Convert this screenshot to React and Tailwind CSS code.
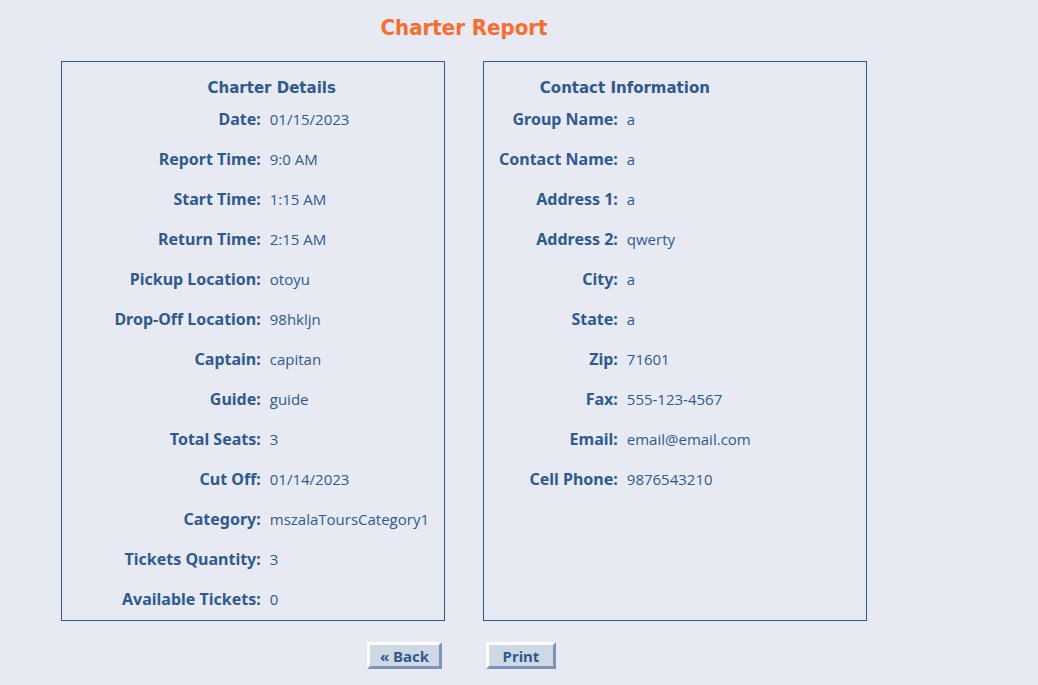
const charter = [
  ['Date', '01/15/2023'],
  ['Report Time', '9:0 AM'],
  ['Start Time', '1:15 AM'],
  ['Return Time', '2:15 AM'],
  ['Pickup Location', 'otoyu'],
  ['Drop-Off Location', '98hkljn'],
  ['Captain', 'capitan'],
  ['Guide', 'guide'],
  ['Total Seats', '3'],
  ['Cut Off', '01/14/2023'],
  ['Category', 'mszalaToursCategory1'],
  ['Tickets Quantity', '3'],
  ['Available Tickets', '0'],
];

const contact = [
  ['Group Name', 'a'],
  ['Contact Name', 'a'],
  ['Address 1', 'a'],
  ['Address 2', 'qwerty'],
  ['City', 'a'],
  ['State', 'a'],
  ['Zip', '71601'],
  ['Fax', '555-123-4567'],
  ['Email', 'email@email.com'],
  ['Cell Phone', '9876543210'],
];

function Panel({ title, rows, align }) {
  return (
    <section className={`flex items-start border border-[#2f5a90] px-[15px] pt-[15px] pb-px ${align}`}>
      <table>
        <caption className="h-[22px] whitespace-nowrap text-[15px] leading-[22px] font-bold font-['Tahoma','DejaVu_Sans',sans-serif]">
          {title}
        </caption>
        <tbody>
          {rows.map(([label, value]) => (
            <tr key={label} className="h-10 whitespace-nowrap">
              <th scope="row" className="pr-[9px] text-right text-base font-bold">
                {label}:
              </th>
              <td className="text-[15px] font-['Tahoma','Open_Sans',sans-serif]">{value}</td>
            </tr>
          ))}
        </tbody>
      </table>
    </section>
  );
}

const button =
  'h-[27px] border-[3px] border-t-white border-l-white border-r-[#7b94b7] border-b-[#7b94b7] bg-[#cfd9e6] text-[15px] leading-5 font-bold';

export default function App() {
  return (
    <div className="min-h-screen bg-[#e7eaf2] pb-4 text-[#2f5a90] font-['Tahoma','Noto_Sans',sans-serif] md:pr-[110px]">
      <h1 className="pt-[13px] text-center text-[22px] leading-[30px] font-bold text-[#fb6b2b] font-['Tahoma','DejaVu_Sans_Condensed',sans-serif]">
        Charter Report
      </h1>
      <main className="mt-[18px] grid gap-[38px] px-4 md:grid-cols-2 md:px-[61px]">
        <Panel title="Charter Details" rows={charter} align="justify-end" />
        <Panel title="Contact Information" rows={contact} align="justify-start" />
      </main>
      <div className="mt-[21px] grid grid-cols-2 gap-[44px]">
        <button type="button" className={`${button} w-[75px] justify-self-end`}>« Back</button>
        <button type="button" className={`${button} w-[70px] justify-self-start`} onClick={() => window.print()}>Print</button>
      </div>
    </div>
  );
}
